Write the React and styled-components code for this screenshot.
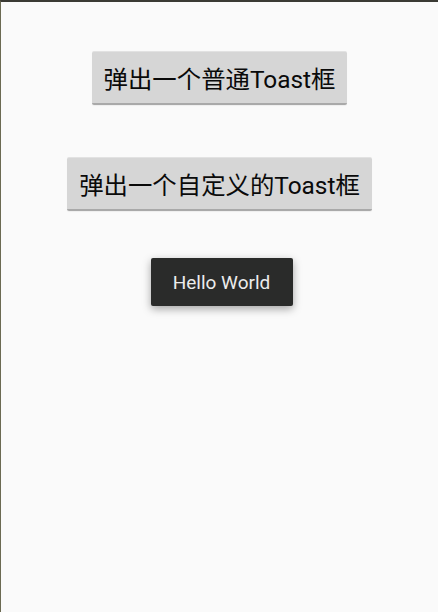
import React from "react";
import styled, { createGlobalStyle } from "styled-components";

const Global = createGlobalStyle`
  html, body { margin: 0; padding: 0; background: #fafafa; }
  body { font-family: Roboto, "Noto Sans CJK SC", sans-serif; }
`;

const Screen = styled.div`
  box-sizing: border-box;
  width: 438px;
  height: 612px;
  background: #fafafa;
  border-top: 2px solid #3a3a34;
  border-left: 1px solid #6b6a52;
  display: flex;
  flex-direction: column;
  align-items: center;
  padding-top: 49px;
`;

const Button = styled.button`
  box-sizing: border-box;
  height: 54px;
  padding: 0 12px;
  margin-bottom: ${(p) => p.$gap}px;
  background: #d6d6d6;
  border: none;
  border-top: 1px solid #e2e2e2;
  border-bottom: 2px solid #a9a9a9;
  border-radius: 2px;
  font-family: Roboto, "Noto Sans CJK SC", sans-serif;
  font-size: 24.4px;
  color: #0a0a0a;
  display: flex;
  align-items: center;
  justify-content: center;
  box-shadow: 0 1px 1px rgba(0,0,0,0.05);
`;

const Toast = styled.div`
  box-sizing: border-box;
  width: 142px;
  height: 48px;
  margin-left: 4px;
  background: #2a2b2a;
  border-radius: 2px;
  color: #ececec;
  font-family: Roboto, sans-serif;
  font-size: 19px;
  display: flex;
  align-items: center;
  justify-content: center;
  box-shadow: 0 3px 8px rgba(0,0,0,0.35);
`;

export default function App() {
  return (
    <>
      <Global />
      <Screen>
        <Button $gap={52}>弹出一个普通Toast框</Button>
        <Button $gap={47}>弹出一个自定义的Toast框</Button>
        <Toast>Hello World</Toast>
      </Screen>
    </>
  );
}
